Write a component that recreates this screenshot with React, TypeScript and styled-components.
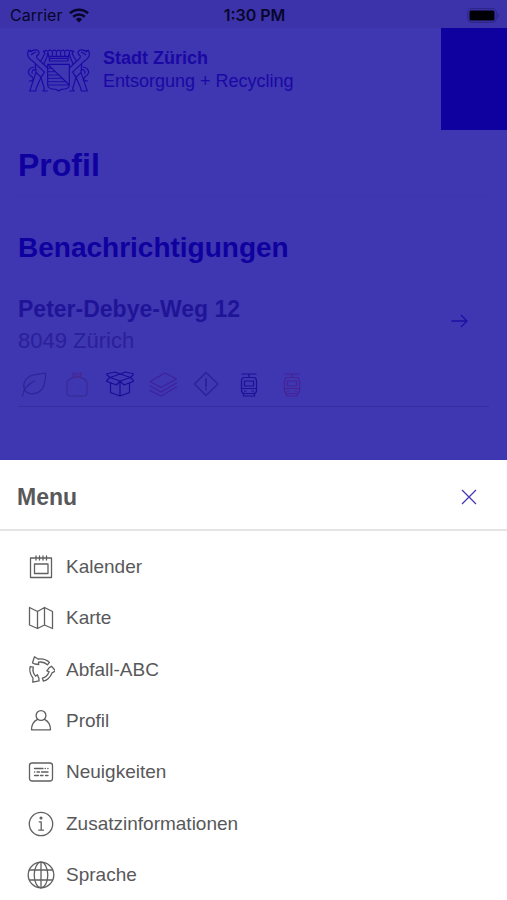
import React from "react";
import styled, { createGlobalStyle } from "styled-components";

const color = {
  veil: "#3f36b1",
  status: "#3c33ab",
  deep: "#0f00a0",
  blueText: "#1a08a4",
  address: "#1f1498",
  addressSoft: "#2b209a",
  rule: "#362c9f",
  text: "#58585a",
  icon: "#606062",
  sheetRule: "#e4e4e4",
};

const GlobalStyle = createGlobalStyle`
  *, *::before, *::after { box-sizing: border-box; }
  body {
    margin: 0;
    background: ${color.veil};
    font-family: "Liberation Sans", Arial, Helvetica, sans-serif;
  }
`;

const Screen = styled.div`
  display: flex;
  flex-direction: column;
  min-height: 100vh;
`;

const StatusBar = styled.div`
  display: grid;
  grid-template-columns: 1fr auto 1fr;
  align-items: center;
  height: 28px;
  padding: 2px 8px 0 10px;
  background: ${color.status};
  color: #08062a;
  font: 400 16px/24px Inter, Roboto, sans-serif;
`;

const Carrier = styled.span`
  display: flex;
  align-items: center;
  gap: 7px;
`;

const Clock = styled.span`
  font-weight: 600;
`;

const BatterySlot = styled.span`
  display: flex;
  justify-content: flex-end;
`;

const Header = styled.header`
  display: flex;
  justify-content: space-between;
  height: 102px;
  padding-left: 27px;
`;

const Brand = styled.div`
  display: flex;
  gap: 13px;
  padding-top: 19px;
  color: ${color.blueText};
`;

const Crest = styled.svg`
  flex: none;
  margin-top: 2px;
`;

const BrandName = styled.p<{ $strong?: boolean }>`
  margin: 0;
  font-size: 18px;
  line-height: 23px;
  font-weight: ${(p) => (p.$strong ? 700 : 400)};
`;

const CornerBlock = styled.div`
  width: 66px;
  background: ${color.deep};
`;

const Main = styled.main`
  padding: 0 18px 53px;
`;

const PageTitle = styled.h1`
  margin: 0;
  padding: 17px 0 13px;
  border-bottom: 1px solid #3e34af;
  color: ${color.deep};
  font-size: 32px;
  line-height: 36px;
`;

const SectionTitle = styled.h2`
  margin: 0;
  padding-top: 35px;
  color: ${color.deep};
  font-size: 28px;
  line-height: 32px;
`;

const AddressCard = styled.article`
  padding: 30px 0 8px;
  border-bottom: 1px solid ${color.rule};
`;

const AddressRow = styled.div`
  display: flex;
  align-items: flex-start;
  justify-content: space-between;
`;

const Street = styled.h3`
  margin: 0;
  color: ${color.address};
  font-size: 23px;
  line-height: 31px;
`;

const City = styled.p`
  margin: 0;
  color: ${color.addressSoft};
  font-size: 22px;
  line-height: 31px;
`;

const IconButton = styled.button<{ $color: string }>`
  display: flex;
  align-items: center;
  justify-content: center;
  width: 38px;
  height: 54px;
  margin-right: 11px;
  padding: 0;
  border: 0;
  background: none;
  color: ${(p) => p.$color};
  cursor: pointer;
`;

const WasteTypes = styled.ul`
  display: flex;
  gap: 15px;
  margin: 0;
  padding: 14px 0 0 2px;
  list-style: none;
`;

const WasteType = styled.li<{ $color: string }>`
  display: flex;
  color: ${(p) => p.$color};
`;

const Sheet = styled.section`
  display: flex;
  flex: 1;
  flex-direction: column;
  background: #fff;
  color: ${color.text};
`;

const SheetHeader = styled.div`
  display: flex;
  align-items: center;
  justify-content: space-between;
  height: 71px;
  padding: 4px 8px 0 17px;
  border-bottom: 2px solid ${color.sheetRule};
`;

const SheetTitle = styled.h2`
  margin: 0;
  font-size: 23px;
  line-height: 28px;
`;

const MenuList = styled.ul`
  display: flex;
  flex: 1;
  flex-direction: column;
  margin: 0;
  padding: 10px 0 0;
  list-style: none;
`;

const MenuItem = styled.li`
  display: flex;
  flex: 1;
  min-height: 48px;
`;

const MenuLink = styled.a`
  display: flex;
  flex: 1;
  align-items: center;
  gap: 11px;
  padding: 1px 0 0 27px;
  color: inherit;
  font-size: 19px;
  line-height: 24px;
  text-decoration: none;

  svg {
    color: ${color.icon};
  }
`;

const Stroke = ({
  size = 28,
  width = 1.3,
  children,
}: {
  size?: number;
  width?: number;
  children: React.ReactNode;
}) => (
  <svg
    width={size}
    height={size}
    viewBox="0 0 28 28"
    fill="none"
    stroke="currentColor"
    strokeWidth={width}
    strokeLinejoin="round"
    strokeLinecap="round"
    aria-hidden="true"
  >
    {children}
  </svg>
);

const CrestLion = () => (
  <>
    <path d="M20 12l7-3M30 3l6 5c1 6-2 10-7 13-1 4 1 7 5 10l28 26M30 3c-7-1-13 0-18 5L5 4 2 12c-1 11 6 19 16 25l36 34" />
    <path d="M5 4l9 2M20 12l-8 6" />
    <path d="M60 4L49 7l5 6-13 24M62 12l-2 12-10 22" />
    <path d="M25 45l2 25-16 48-3 8h18l2-9 14-32 10 34-4 7h14M27 70l15 15 9-14" />
    <path d="M22 54C8 54 1 66 6 75c4 7 12 8 13 15-2 6-9 7-13 5M25 62c-8-1-12 6-9 12" />
  </>
);

const CityCrest = () => (
  <Crest
    width="63"
    height="43"
    viewBox="0 0 189 129"
    fill="none"
    stroke="currentColor"
    strokeWidth="3.4"
    strokeLinejoin="round"
    role="img"
    aria-label="Stadt Zürich"
  >
    <CrestLion />
    <g transform="translate(189 0) scale(-1 1)">
      <CrestLion />
    </g>
    <path d="M62 7l7-4 7 4 6-4 7 4 6-4 6 4 7-4 6 4 7-4 7 4-5 21H67zM76 9v11M88 9v11M101 9v11M113 9v11M67 22h56M67 28v8h56v-8" />
    <path d="M62 46h65v61c0 8-7 13-15 13-8 0-13 2-17 6-4-4-9-6-17-6s-16-5-16-13zM62 46l65 62" />
    <path strokeWidth="2.6" d="M62 58h12M62 68h22M62 78h32M62 88h42M62 98h53M63 108h63" />
  </Crest>
);

const Wifi = () => (
  <svg width="20" height="15" viewBox="0 0 20 15" fill="none" stroke="currentColor" strokeWidth="2.6" aria-hidden="true">
    <path d="M1 5.3a13 13 0 0 1 18 0M4.2 8.8a8.4 8.4 0 0 1 11.6 0" />
    <path d="M6.8 11.3a4.8 4.8 0 0 1 6.4 0L10 14.5z" fill="currentColor" stroke="none" />
  </svg>
);

const Battery = () => (
  <svg width="32" height="15" viewBox="0 0 32 15" aria-hidden="true">
    <rect x="0.7" y="0.7" width="28.6" height="13.6" rx="4" fill="none" stroke="#2f268c" strokeWidth="1.2" />
    <rect x="2.5" y="2.5" width="25" height="10" rx="1.6" fill="#010006" />
    <path d="M30.5 5.2a2.4 2.4 0 0 1 0 4.6z" fill="#2f268c" />
  </svg>
);

const Tram = () => (
  <>
    <path d="M7 4h14M14 4v3M9.5 7.5h9c2 0 3 1.5 3 3.5v9.500c0 2-1 3-3 3h-9c-2 0-3-1-3-3V11c0-2 1-3.500 3-3.500z" />
    <path d="M9.5 11h9v5h-9zM6.5 18.5h15M9.5 21h1.5M17 21h1.5M8.5 24v2h11v-2" />
  </>
);

const wasteTypes = [
  {
    name: "Grüngut",
    color: "#2e2496",
    icon: <path d="M2.5 26c.5-6 4-11 12-15M5.5 21.5C1 14 6 7 13 5c4-1 8-.8 12.5-2 .2 6-.5 10.5-2.5 14.5-3 6-12 8.5-17.5 4z" />,
  },
  {
    name: "Kehricht",
    color: "#382a94",
    icon: (
      <>
        <path d="M11 7c-3 2-7 2-7 6v9c0 3 1 4 3 4h14c2 0 3-1 3-4v-9c0-4-4-4-7-6z" />
        <path d="M10 7h8M10.5 6l-1-3 3 1 1.5-1 1.5 1 3-1-1 3z" stroke="#4a2795" />
      </>
    ),
  },
  {
    name: "Karton",
    color: "#190d98",
    icon: (
      <path d="M14 11L4 7.5 14 4l10.500 3.500L14 11zM14 11v15M4.500 13v9.500L14 26l9.500-3.500V13M4 7.500L0 11l10.500 4L14 11l4 4 10-4-3.500-3.500M4 7.500L0 4l9-2 5 2 5.500-2 8.500 2-3.500 3.500" />
    ),
  },
  {
    name: "Papier",
    color: "#3f219a",
    icon: <path d="M1 11.5L16 3l11.5 6L12 17.5zM1 16l11 6 15.5-9M1 20.5l11 5.5 15.5-9" />,
  },
  {
    name: "Sonderabfall",
    color: "#2b2198",
    icon: (
      <>
        <path d="M14 2.5L26 14 14 25.5 2.5 14z" />
        <path d="M14 9v7.5M14 19v.5" strokeWidth="1.8" />
      </>
    ),
  },
  { name: "Cargo-Tram", color: "#1a1196", icon: <Tram /> },
  { name: "E-Tram", color: "#472297", icon: <Tram /> },
];

const menu = [
  {
    label: "Kalender",
    icon: <path d="M3.5 5h21v19.5h-21zM7.5 11H21v9.5H7.5zM9 3v4M12.5 3v4M16 3v4M19.5 3v4" />,
  },
  {
    label: "Karte",
    icon: <path d="M2.5 3.5l8 4 7-4 8 4v17l-8-3.500-7 3.500-8-3.500zM10.5 7.5v17M17.5 3.5V21" />,
  },
  {
    label: "Abfall-ABC",
    icon: (
      <>
        {[0, 120, 240].map((angle) => (
          <path
            key={angle}
            transform={`rotate(${angle} 14 14)`}
            d="M7.5.8L5.500 6.800l2.300 1.200 4 .5-.4-2.300c3.600-.6 6.600.2 9 2.600l2-2.400C19.500 3.500 15.500 2.400 11 3z"
          />
        ))}
      </>
    ),
  },
  {
    label: "Profil",
    icon: (
      <>
        <circle cx="14" cy="8.5" r="4.9" />
        <path d="M10.5 12.3C7 14 4.5 17.5 4.5 22.8h19c0-5.3-2.500-8.800-6-10.500" />
      </>
    ),
  },
  {
    label: "Neuigkeiten",
    icon: (
      <>
        <rect x="2.5" y="5" width="23" height="18" rx="2.5" />
        <path d="M7.5 10.5H16M18.2 10.5h.2M20.8 10.5h.2M7.5 14h.2M10 14h2.5M14.5 14H21M7.5 17.5h4M13.5 17.5H16M18.5 17.5H21" />
      </>
    ),
  },
  {
    label: "Zusatzinformationen",
    icon: (
      <>
        <circle cx="14" cy="14" r="11.7" />
        <path d="M12.2 11.8h2v8.4M11.8 20.2h4.7" />
        <circle cx="14" cy="8" r=".9" fill="currentColor" />
      </>
    ),
  },
  {
    label: "Sprache",
    icon: (
      <>
        <circle cx="14" cy="14" r="12.8" />
        <ellipse cx="14" cy="14" rx="6.8" ry="12.8" />
        <path d="M14 1.2v25.6M2.5 9h23M2.5 19h23" />
      </>
    ),
  },
];

export default function App() {
  return (
    <>
      <GlobalStyle />
      <Screen>
        <StatusBar>
          <Carrier>
            Carrier
            <Wifi />
          </Carrier>
          <Clock>1:30 PM</Clock>
          <BatterySlot>
            <Battery />
          </BatterySlot>
        </StatusBar>

        <Header>
          <Brand>
            <CityCrest />
            <div>
              <BrandName $strong>Stadt Zürich</BrandName>
              <BrandName>Entsorgung + Recycling</BrandName>
            </div>
          </Brand>
          <CornerBlock />
        </Header>

        <Main>
          <PageTitle>Profil</PageTitle>
          <SectionTitle>Benachrichtigungen</SectionTitle>
          <AddressCard>
            <AddressRow>
              <div>
                <Street>Peter-Debye-Weg 12</Street>
                <City>8049 Zürich</City>
              </div>
              <IconButton type="button" aria-label="Adresse öffnen" $color="#1c0fa3">
                <svg width="17" height="14" viewBox="0 0 17 14" fill="none" stroke="currentColor" strokeWidth="1.4" aria-hidden="true">
                  <path d="M.5 7H16M10 1l6 6-6 6" />
                </svg>
              </IconButton>
            </AddressRow>
            <WasteTypes>
              {wasteTypes.map(({ name, color: tint, icon }) => (
                <WasteType key={name} $color={tint} aria-label={name}>
                  <Stroke width={1.2}>{icon}</Stroke>
                </WasteType>
              ))}
            </WasteTypes>
          </AddressCard>
        </Main>

        <Sheet aria-labelledby="menu-title">
          <SheetHeader>
            <SheetTitle id="menu-title">Menu</SheetTitle>
            <IconButton type="button" aria-label="Menu schliessen" $color="#4338b4">
              <svg width="16" height="16" viewBox="0 0 16 16" fill="none" stroke="currentColor" strokeWidth="1.3" aria-hidden="true">
                <path d="M1 1l14 14M15 1L1 15" />
              </svg>
            </IconButton>
          </SheetHeader>
          <MenuList>
            {menu.map(({ label, icon }) => (
              <MenuItem key={label}>
                <MenuLink href={`#${label.toLowerCase()}`}>
                  <Stroke>{icon}</Stroke>
                  {label}
                </MenuLink>
              </MenuItem>
            ))}
          </MenuList>
        </Sheet>
      </Screen>
    </>
  );
}
